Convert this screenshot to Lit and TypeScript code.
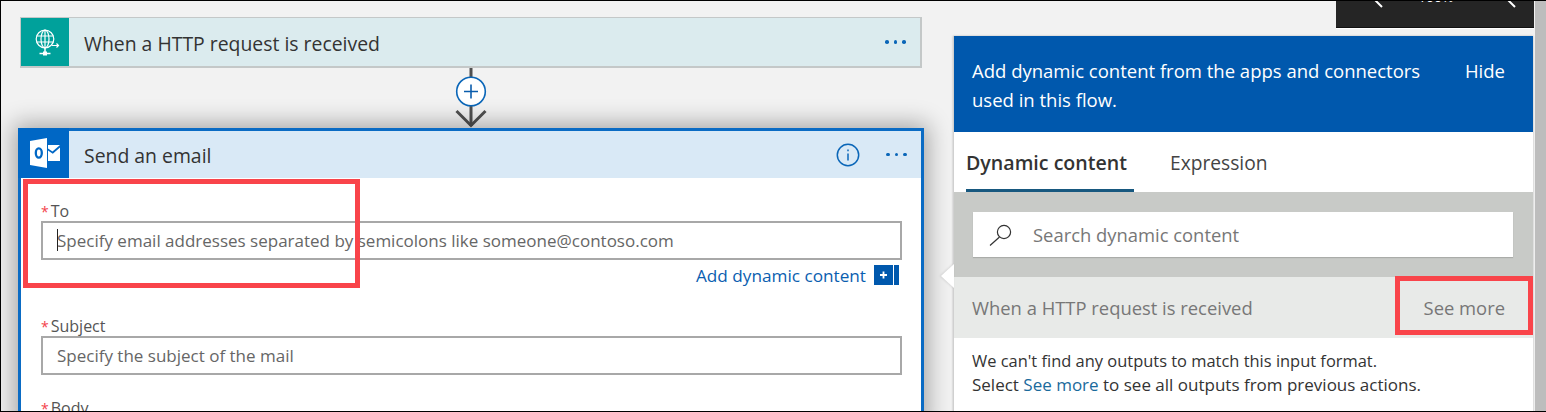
import { LitElement, html, css } from "lit";
import { customElement } from "lit/decorators.js";

@customElement("app-root")
export class AppRoot extends LitElement {
  static styles = css`
    :host {
      display: block;
      width: 1546px;
      height: 412px;
      font-family: "Open Sans", "Noto Sans", "Liberation Sans", sans-serif;
    }
    * { box-sizing: border-box; }
    .frame {
      position: relative;
      width: 1546px;
      height: 412px;
      overflow: hidden;
      background: #f2f2f2;
      border-top: 1px solid #000;
      border-left: 1px solid #000;
      border-bottom: 1px solid #000;
      display: flex;
      align-items: flex-start;
    }
    .left {
      width: 923px;
      flex: none;
      padding: 16px 0 0 17px;
    }
    .trigger {
      width: 902px;
      height: 51px;
      margin-left: 2px;
      display: flex;
      align-items: stretch;
      background: #dbebee;
      border: 2px solid #c4c8c8;
      border-left-width: 1px;
      border-top-width: 1px;
    }
    .ticon {
      width: 48px;
      flex: none;
      background: #00a19b;
      display: flex;
      align-items: center;
      justify-content: center;
    }
    .title {
      flex: 1;
      margin-left: 15px;
      padding-top: 2px;
      font-size: 19.4px;
      line-height: 48px;
      color: #333;
      white-space: nowrap;
    }
    .dots {
      display: flex;
      gap: 5px;
      align-items: center;
      margin-right: 14px;
    }
    .dots i {
      width: 3.6px;
      height: 3.6px;
      border-radius: 50%;
      background: #0a66b8;
    }
    .connector {
      width: 60px;
      height: 60px;
      margin-left: 423px;
      display: block;
    }
    .card {
      width: 906px;
      height: 300px;
      border: 3px solid #0a6bc4;
      border-bottom: 0;
      background: #fff;
      box-shadow: 0 0 22px 4px rgba(0, 0, 0, 0.32);
      position: relative;
    }
    .chead {
      height: 47px;
      display: flex;
      align-items: stretch;
      background: #d9e9f6;
    }
    .cicon {
      width: 51px;
      flex: none;
      margin-top: -3px;
      margin-left: -3px;
      height: 50px;
      padding-left: 3px;
      background: #0067c5;
      display: flex;
      align-items: center;
      justify-content: center;
    }
    .chead .title { margin-left: 15px; padding-top: 1px; line-height: 47px; }
    .info { align-self: center; margin-right: 26px; display: block; }
    .body { padding: 23px 19px 0 20px; }
    .label {
      height: 20px;
      font-size: 16px;
      line-height: 20px;
      color: #555;
      white-space: nowrap;
    }
    .label b { color: #f3414b; font-size: 14px; font-weight: 400; margin-right: 2px; }
    .input {
      height: 39px;
      border: 2px solid #a8a8a8;
      padding-left: 14px;
      font-size: 17px;
      line-height: 35px;
      color: #666;
      white-space: nowrap;
      position: relative;
    }
    .caret {
      position: absolute;
      left: 14px;
      top: 6px;
      width: 1px;
      height: 22px;
      background: #222;
    }
    .dyn {
      height: 37px;
      padding-top: 5px;
      display: flex;
      justify-content: flex-end;
      align-items: flex-start;
      gap: 8px;
      padding-right: 3px;
      font-size: 17.2px;
      line-height: 21px;
      color: #0a5eb0;
    }
    .dynicon { display: block; }
    .gap { height: 19px; }
    .gap.short { height: 23px; }
    .redbox {
      position: absolute;
      left: 2px;
      top: 48px;
      width: 337px;
      height: 109px;
      border: 5px solid #f9444a;
      pointer-events: none;
    }
    .panel {
      position: relative;
      margin: 35px 0 0 29px;
      width: 580px;
      height: 376px;
      flex: none;
      background: #fff;
      border-left: 1px solid #d0d0d0;
      box-shadow: 0 0 2px rgba(0, 0, 0, 0.25);
    }
    .phead {
      height: 96px;
      background: #0058ad;
      color: #fff;
      display: flex;
      justify-content: space-between;
      padding: 20px 28px 0 18px;
      font-size: 18.5px;
      line-height: 29px;
    }
    .phead p { margin: 0; width: 455px; }
    .hide { font-size: 18.5px; line-height: 30px; }
    .tabs {
      height: 60px;
      display: flex;
      padding-left: 12px;
      gap: 36px;
      font-size: 19.2px;
      line-height: 62px;
      color: #444;
      white-space: nowrap;
    }
    .tab { height: 60px; }
    .tab.on {
      color: #333;
      font-size: 19.6px;
      font-weight: 600;
      padding-right: 7px;
      border-bottom: 3px solid #17587f;
    }
    .search {
      height: 85px;
      background: #c8cac7;
      padding: 20px 20px 0 19px;
    }
    .sbox {
      height: 45px;
      background: #fff;
      box-shadow: 0 1px 1px rgba(0, 0, 0, 0.15);
      display: flex;
      align-items: center;
      padding-left: 15px;
      gap: 19px;
      font-size: 18.4px;
      color: #777;
    }
    .sect {
      height: 61px;
      background: #e8eae8;
      display: flex;
      align-items: center;
      justify-content: space-between;
      padding: 0 28px 0 18px;
      font-size: 18.4px;
      color: #777;
      white-space: nowrap;
    }
    .msg {
      padding: 11px 0 0 18px;
      line-height: 24px;
      color: #333;
      white-space: nowrap;
    }
    .l1 { font-size: 16.45px; display: block; }
    .l2 { font-size: 17px; display: block; }
    .msg a { color: #1a6a9c; text-decoration: none; }
    .redsmall {
      position: absolute;
      right: 0;
      top: 240px;
      width: 138px;
      height: 59px;
      border: 5px solid #f9444a;
      pointer-events: none;
    }
    .notch {
      position: absolute;
      left: -13px;
      top: 228px;
      width: 0;
      height: 0;
      border-top: 12px solid transparent;
      border-bottom: 12px solid transparent;
      border-right: 13px solid #fff;
      filter: drop-shadow(-1px 0 1px rgba(0, 0, 0, 0.12));
    }
    .gutter {
      position: absolute;
      right: 0;
      top: 0;
      bottom: 0;
      width: 11px;
      background: #bdbdbd;
    }
    .zoom {
      position: absolute;
      left: 1335px;
      top: -1px;
      width: 198px;
      height: 28px;
      background: #252525;
      border-bottom: 1px solid #111;
      box-shadow: 0 1px 0 #fff;
      overflow: hidden;
    }
    .zoom svg { position: absolute; left: 0; top: 0; display: block; }
    .pct {
      position: absolute;
      left: 82px;
      top: -12px;
      font-size: 14px;
      line-height: 18px;
      color: #fff;
    }
  `;

  render() {
    return html`<div class="frame">
      <div class="left">
        <div class="trigger">
          <div class="ticon">
            <svg width="32" height="32" viewBox="0 0 32 32" fill="none" stroke="#fff" stroke-width="1.2">
              <circle cx="16" cy="13" r="8.8"></circle>
              <ellipse cx="16" cy="13" rx="4" ry="8.8"></ellipse>
              <path d="M7.5 10h17M7.5 16h17M16 4v18"></path>
              <path d="M16 22v4M10.5 27.5h11" stroke-width="1.5"></path>
              <rect x="14" y="25.5" width="4" height="4" fill="#fff" stroke="none"></rect>
              <path d="M23 19.5h6.5M27.5 17.5l2 2-2 2"></path>
            </svg>
          </div>
          <div class="title">When a HTTP request is received</div>
          <div class="dots"><i></i><i></i><i></i></div>
        </div>
        <svg class="connector" viewBox="0 0 60 60" fill="none">
          <path d="M30 0v58" stroke="#505050" stroke-width="3"></path>
          <path d="M15.5 43 30 57.5 44.5 43" stroke="#505050" stroke-width="3"></path>
          <circle cx="30" cy="23.5" r="14.3" fill="#fff" stroke="#0a66b8" stroke-width="1.6"></circle>
          <path d="M30 16.5v14M23 23.5h14" stroke="#0a5cac" stroke-width="1.6"></path>
        </svg>
        <div class="card">
          <div class="chead">
            <div class="cicon">
              <svg width="30" height="30" viewBox="0 0 30 30">
                <path d="M0 3 17 0v30L0 27z" fill="#fff"></path>
                <ellipse cx="8.8" cy="15" rx="3" ry="4.6" fill="none" stroke="#0067c5" stroke-width="2.3"></ellipse>
                <path d="M18 7h12l-7.5 6.5L18 10.5z" fill="#fff"></path>
                <path d="M18 12.5l4.8 3.2L30 9.5V23H18z" fill="#fff"></path>
              </svg>
            </div>
            <div class="title">Send an email</div>
            <svg class="info" width="24" height="24" viewBox="0 0 24 24" fill="none" stroke="#0a66b8">
              <circle cx="12" cy="12" r="10.7" stroke-width="1.5"></circle>
              <path d="M12 10.5v7" stroke-width="1.5"></path>
              <path d="M12 6.5v1.7" stroke-width="1.5"></path>
            </svg>
            <div class="dots"><i></i><i></i><i></i></div>
          </div>
          <div class="body">
            <div class="label"><b>*</b>To</div>
            <div class="input"><span class="caret"></span>Specify email addresses separated by semicolons like someone@contoso.com</div>
            <div class="dyn">
              <span>Add dynamic content</span>
              <svg class="dynicon" width="25" height="20" viewBox="0 0 25 20">
                <rect x="0" y="0" width="19" height="20" fill="#0058ad"></rect>
                <rect x="20" y="0" width="5" height="20" fill="#0058ad"></rect>
                <path d="M9.5 6.5v7M6 10h7" stroke="#fff" stroke-width="1.8"></path>
              </svg>
            </div>
            <div class="gap"></div>
            <div class="label"><b>*</b>Subject</div>
            <div class="input">Specify the subject of the mail</div>
            <div class="gap short"></div>
            <div class="label"><b>*</b>Body</div>
          </div>
          <div class="redbox"></div>
        </div>
      </div>
      <div class="panel">
        <div class="notch"></div>
        <div class="phead">
          <p>Add dynamic content from the apps and connectors used in this flow.</p>
          <div class="hide">Hide</div>
        </div>
        <div class="tabs">
          <div class="tab on">Dynamic content</div>
          <div class="tab">Expression</div>
        </div>
        <div class="search">
          <div class="sbox">
            <svg width="26" height="24" viewBox="0 0 26 24" fill="none" stroke="#333" stroke-width="1.2">
              <circle cx="16" cy="9" r="6.6"></circle>
              <path d="M11.5 14 2 22.5"></path>
            </svg>
            <span>Search dynamic content</span>
          </div>
        </div>
        <div class="sect"><span>When a HTTP request is received</span><span>See more</span></div>
        <div class="msg">
          <span class="l1">We can't find any outputs to match this input format.</span>
          <span class="l2">Select <a>See more</a> to see all outputs from previous actions.</span>
        </div>
        <div class="redsmall"></div>
      </div>
      <div class="gutter"></div>
      <div class="zoom">
        <svg width="198" height="28" viewBox="0 0 198 28">
          <path d="M37 -2 46 7M170 -2 179 7" stroke="#fff" stroke-width="2"></path>
        </svg>
        <span class="pct">100%</span>
      </div>
    </div>`;
  }
}
